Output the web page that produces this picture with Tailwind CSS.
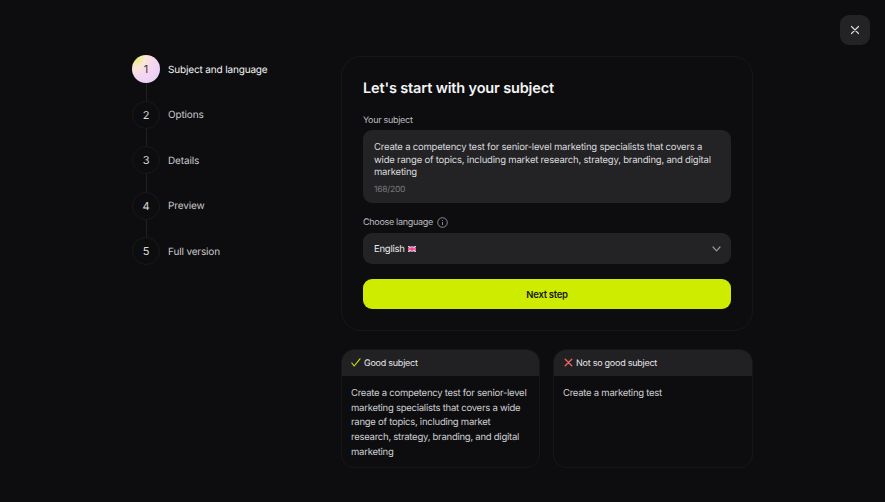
<!DOCTYPE html>
<html lang="en">
<head>
    <meta charset="UTF-8">
    <meta name="viewport" content="width=device-width, initial-scale=1.0">
    <title>Create test</title>
    <script src="https://cdn.jsdelivr.net/npm/@tailwindcss/browser@4"></script>
</head>
<body class="bg-[#0d0d10] overflow-hidden font-['Inter',sans-serif] [text-rendering:geometricPrecision]">
    <div class="relative w-[885px] h-[502px] flex items-start pl-[132px] pt-[55px]">
        <!-- Close -->
        <button class="absolute top-[15px] right-[15px] w-[30px] h-[30px] rounded-[9px] bg-[#232326] flex items-center justify-center">
            <svg class="w-[10px] h-[10px]" viewBox="0 0 10 10" fill="none" stroke="#d8d8da" stroke-width="1.2" stroke-linecap="round"><path d="M1.5 1.5l7 7M8.5 1.5l-7 7"/></svg>
        </button>

        <!-- Steps -->
        <div class="w-[209px] shrink-0 flex flex-col text-[10px] tracking-[-0.15px] leading-[26px] text-[#c8c8ca]">
            <div class="flex items-center gap-[8px] h-[28px]">
                <div class="w-[28px] h-[28px] rounded-full bg-[radial-gradient(circle_at_12%_8%,#e4f25c_0%,#fbe6d8_28%,#f4d4f2_58%,#e0d2fb_100%)] flex items-center justify-center text-[11px] text-[#3a3a3e]">1</div>
                <span class="pt-[1px] text-[#f4f4f5]">Subject and language</span>
            </div>
            <div class="w-px h-[17.5px] ml-[14px] bg-[#202023]"></div>
            <div class="flex items-center gap-[8px] h-[28px]">
                <div class="w-[28px] h-[28px] rounded-full border border-[#19191c] flex items-center justify-center text-[11px] text-[#d8d8da]">2</div>
                <span class="pt-[1px]">Options</span>
            </div>
            <div class="w-px h-[17.5px] ml-[14px] bg-[#202023]"></div>
            <div class="flex items-center gap-[8px] h-[28px]">
                <div class="w-[28px] h-[28px] rounded-full border border-[#19191c] flex items-center justify-center text-[11px] text-[#d8d8da]">3</div>
                <span class="pt-[1px]">Details</span>
            </div>
            <div class="w-px h-[17.5px] ml-[14px] bg-[#202023]"></div>
            <div class="flex items-center gap-[8px] h-[28px]">
                <div class="w-[28px] h-[28px] rounded-full border border-[#19191c] flex items-center justify-center text-[11px] text-[#d8d8da]">4</div>
                <span class="pt-[1px]">Preview</span>
            </div>
            <div class="w-px h-[17.5px] ml-[14px] bg-[#202023]"></div>
            <div class="flex items-center gap-[8px] h-[28px]">
                <div class="w-[28px] h-[28px] rounded-full border border-[#19191c] flex items-center justify-center text-[11px] text-[#d8d8da]">5</div>
                <span class="pt-[1px]">Full version</span>
            </div>
        </div>

        <!-- Main column -->
        <div class="w-[412px] shrink-0 mt-[1px]">
            <div class="h-[275px] rounded-[20px] border border-[#17171a] px-[21px] pt-[22px]">
                <h1 class="text-[14.5px] tracking-[-0.15px] leading-[20px] font-semibold text-[#f4f4f5]">Let's start with your subject</h1>
                <p class="mt-[16px] text-[9px] tracking-[-0.3px] leading-[12px] text-[#bdbdc0]">Your subject</p>
                <div class="mt-[3px] h-[73px] rounded-[9px] bg-[#232326] px-[11px] pt-[12px]">
                    <p class="text-[9.5px] tracking-[-0.2px] leading-[12.5px] text-[#dcdcde]">Create a competency test for senior-level marketing specialists that covers a wide range of topics, including market research, strategy, branding, and digital marketing</p>
                    <p class="mt-[4px] text-[8.5px] tracking-[-0.25px] leading-[12px] text-[#77777b]">168/200</p>
                </div>
                <div class="mt-[13px] flex items-center gap-[4px] h-[13px]">
                    <span class="text-[9px] tracking-[-0.3px] text-[#bdbdc0]">Choose language</span>
                    <svg class="w-[11px] h-[11px]" viewBox="0 0 11 11" fill="none" stroke="#a8a8ab" stroke-width="0.8"><circle cx="5.5" cy="5.5" r="4.8"/><path d="M5.5 5v3M5.5 3v.9"/></svg>
                </div>
                <div class="mt-[4px] h-[31px] rounded-[9px] bg-[#232326] pl-[11px] pr-[10px] flex items-center justify-between">
                    <div class="flex items-center gap-[3px] text-[9.5px] tracking-[-0.25px] text-[#e8e8ea]">
                        <span class="pt-[3px]">English</span>
                        <svg class="w-[8px] h-[6px]" viewBox="0 0 16 12"><rect width="16" height="12" fill="#4a4aa0"/><path d="M0 0l16 12M16 0L0 12" stroke="#f3d6e0" stroke-width="2.4"/><path d="M8 0v12M0 6h16" stroke="#f3d6e0" stroke-width="4.5"/><path d="M8 0v12M0 6h16" stroke="#ee3a70" stroke-width="2.6"/></svg>
                    </div>
                    <svg class="w-[9px] h-[6px] mr-[0.5px]" viewBox="0 0 9 6" fill="none" stroke="#97979a" stroke-width="1.2" stroke-linecap="round" stroke-linejoin="round"><path d="M1 1l3.5 3.8L8 1"/></svg>
                </div>
                <button class="mt-[15px] w-full h-[30px] pt-[2px] rounded-[9px] bg-[#cdec00] text-[9.5px] tracking-[-0.3px] font-semibold text-[#17180d]">Next step</button>
            </div>

            <!-- Examples -->
            <div class="mt-[18px] flex gap-[13px]">
                <div class="w-[199px] h-[119px] rounded-[13px] border border-[#17171a] overflow-hidden">
                    <div class="h-[26px] bg-[#212124] flex items-center gap-[3px] pl-[9px] text-[9px] tracking-[-0.25px] text-[#e6e6e8]">
                        <svg class="w-[10px] h-[9px] mb-[2px]" viewBox="0 0 10 9" fill="none" stroke="#cdec00" stroke-width="1.1" stroke-linecap="round" stroke-linejoin="round"><path d="M.8 5l2.4 3L9 .8"/></svg>
                        <span class="pt-[1px]">Good subject</span>
                    </div>
                    <p class="px-[9px] pt-[11px] text-[9.5px] tracking-[-0.25px] leading-[14.7px] text-[#d0d0d2]">Create a competency test for senior-level marketing specialists that covers a wide range of topics, including market research, strategy, branding, and digital marketing</p>
                </div>
                <div class="w-[200px] h-[119px] rounded-[13px] border border-[#17171a] overflow-hidden">
                    <div class="h-[26px] bg-[#212124] flex items-center gap-[3px] pl-[10px] text-[9px] tracking-[-0.25px] text-[#e6e6e8]">
                        <svg class="w-[9px] h-[9px] mb-[2px]" viewBox="0 0 9 9" fill="none" stroke="#f0625f" stroke-width="1.3" stroke-linecap="round"><path d="M1.2 1.2l6.6 6.6M7.8 1.2L1.2 7.8"/></svg>
                        <span class="pt-[1px]">Not so good subject</span>
                    </div>
                    <p class="px-[9px] pt-[11px] text-[9.5px] tracking-[-0.25px] leading-[14.7px] text-[#d0d0d2]">Create a marketing test</p>
                </div>
            </div>
        </div>
    </div>
</body>
</html>
